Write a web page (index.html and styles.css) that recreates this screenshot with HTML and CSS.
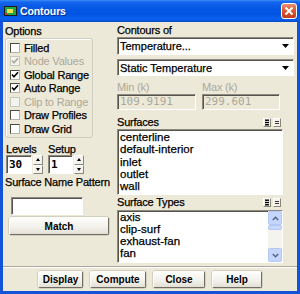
FILE: index.html
```html
<!DOCTYPE html>
<html lang="en">
<head>
  <meta charset="UTF-8">
  <title>Contours</title>
  <link rel="stylesheet" href="styles.css">
</head>
<body>
  <div class="window">
    <!-- TITLE BAR -->
    <div class="titlebar">
      <svg class="app-icon" width="13" height="10" viewBox="0 0 13 10">
        <rect x="0" y="0" width="13" height="10" fill="#1b1b1b"/>
        <rect x="1" y="1" width="11" height="8" fill="#1fa84a"/>
        <rect x="3" y="3" width="6" height="4" fill="#f4e04a"/>
        <rect x="1" y="7" width="3" height="2" fill="#d83a2a"/>
      </svg>
      <span class="title">Contours</span>
      <span class="close-btn">
        <svg width="10" height="10" viewBox="0 0 10 10"><path d="M1.5 1.5 L8.5 8.5 M8.5 1.5 L1.5 8.5" stroke="#fff" stroke-width="2"/></svg>
      </span>
    </div>

    <div class="client">
      <div class="main">
        <!-- LEFT -->
        <div class="col-left">
          <div class="label opt-label">Options</div>
          <div class="group">
            <div class="check"><span class="box"></span>Filled</div>
            <div class="check disabled"><span class="box on"><svg width="8" height="8" viewBox="0 0 8 8"><path d="M1 3.5 L3 5.8 L7 1.2" stroke="#aca899" stroke-width="1.6" fill="none"/></svg></span>Node Values</div>
            <div class="check"><span class="box on"><svg width="8" height="8" viewBox="0 0 8 8"><path d="M1 3.5 L3 5.8 L7 1.2" stroke="#000" stroke-width="1.6" fill="none"/></svg></span>Global Range</div>
            <div class="check"><span class="box on"><svg width="8" height="8" viewBox="0 0 8 8"><path d="M1 3.5 L3 5.8 L7 1.2" stroke="#000" stroke-width="1.6" fill="none"/></svg></span>Auto Range</div>
            <div class="check disabled"><span class="box"></span>Clip to Range</div>
            <div class="check"><span class="box"></span>Draw Profiles</div>
            <div class="check"><span class="box"></span>Draw Grid</div>
          </div>

          <div class="spins">
            <div class="spin">
              <div class="label">Levels</div>
              <div class="spin-ctl">
                <div class="field num levels">30</div>
                <div class="arrows"><span class="up"></span><span class="down"></span></div>
              </div>
            </div>
            <div class="spin">
              <div class="label">Setup</div>
              <div class="spin-ctl">
                <div class="field num setup">1</div>
                <div class="arrows"><span class="up"></span><span class="down"></span></div>
              </div>
            </div>
          </div>

          <div class="label snp-label">Surface Name Pattern</div>
          <div class="field pattern"></div>
          <div class="btn match">Match</div>
        </div>

        <!-- RIGHT -->
        <div class="col-right">
          <div class="label">Contours of</div>
          <div class="dd dd-first"><span>Temperature...</span><svg width="7" height="4" viewBox="0 0 7 4"><path d="M0 0 H7 L3.5 4 Z" fill="#000"/></svg></div>
          <div class="dd dd-second"><span>Static Temperature</span><svg width="7" height="4" viewBox="0 0 7 4"><path d="M0 0 H7 L3.5 4 Z" fill="#000"/></svg></div>

          <div class="minmax-labels">
            <div class="label disabled min-label">Min (k)</div>
            <div class="label disabled">Max (k)</div>
          </div>
          <div class="minmax-fields">
            <div class="field ro min-field">109.9191</div>
            <div class="field ro max-field">299.601</div>
          </div>

          <div class="list-head surfaces-head">
            <span class="label">Surfaces</span>
            <span class="tool-icons">
              <span class="tool"><svg width="6" height="7" viewBox="0 0 6 7"><rect x="1" y="0.5" width="4" height="1.4" fill="#000"/><rect x="1" y="2.8" width="4" height="1.4" fill="#000"/><rect x="1" y="5.1" width="4" height="1.4" fill="#000"/></svg></span>
              <span class="tool"><svg width="6" height="7" viewBox="0 0 6 7"><rect x="1" y="2" width="4" height="1" fill="#333"/><rect x="1" y="4" width="4" height="1" fill="#333"/></svg></span>
            </span>
          </div>
          <div class="list surfaces">
            <div>centerline</div>
            <div>default-interior</div>
            <div>inlet</div>
            <div>outlet</div>
            <div>wall</div>
          </div>

          <div class="list-head types-head">
            <span class="label">Surface Types</span>
            <span class="tool-icons">
              <span class="tool"><svg width="6" height="7" viewBox="0 0 6 7"><rect x="1" y="0.5" width="4" height="1.4" fill="#000"/><rect x="1" y="2.8" width="4" height="1.4" fill="#000"/><rect x="1" y="5.1" width="4" height="1.4" fill="#000"/></svg></span>
              <span class="tool"><svg width="6" height="7" viewBox="0 0 6 7"><rect x="1" y="2" width="4" height="1" fill="#333"/><rect x="1" y="4" width="4" height="1" fill="#333"/></svg></span>
            </span>
          </div>
          <div class="list types">
            <div class="items">
              <div>axis</div>
              <div>clip-surf</div>
              <div>exhaust-fan</div>
              <div>fan</div>
            </div>
            <div class="scrollbar">
              <div class="sb-btn"><svg width="7" height="5" viewBox="0 0 7 5"><path d="M0.8 4 L3.5 1.3 L6.2 4" stroke="#4d6185" stroke-width="1.4" fill="none"/></svg></div>
              <div class="sb-thumb"></div>
              <div class="sb-track"></div>
              <div class="sb-btn"><svg width="7" height="5" viewBox="0 0 7 5"><path d="M0.8 1 L3.5 3.7 L6.2 1" stroke="#4d6185" stroke-width="1.4" fill="none"/></svg></div>
            </div>
          </div>
        </div>
      </div>

      <div class="sep"></div>

      <!-- BUTTONS -->
      <div class="buttons">
        <div class="btn b-display">Display</div>
        <div class="btn b-compute">Compute</div>
        <div class="btn b-close">Close</div>
        <div class="btn b-help">Help</div>
      </div>
    </div>
  </div>
</body>
</html>
```

FILE: styles.css
```css
* {
  margin: 0;
  padding: 0;
  box-sizing: border-box;
}

body {
  width: 300px;
  height: 294px;
  overflow: hidden;
  font-family: "Liberation Sans", Arial, sans-serif;
  font-size: 11px;
  color: #000;
  background: #fff;
  -webkit-text-stroke: 0.25px;
}

.window {
  width: 300px;
  height: 294px;
  display: flex;
  flex-direction: column;
  background: #1353d8;
}

/* TITLE BAR */
.titlebar {
  height: 22px;
  flex: none;
  display: flex;
  align-items: center;
  padding: 0 3px;
  background: linear-gradient(#3d8df7 0, #1466ee 2px, #0759e6 7px, #0054e2 14px, #0a62ef 19px, #034acc 22px);
}

.app-icon {
  margin: 0 3px 0 1px;
}

.title {
  flex: 1;
  color: #fff;
  font-weight: bold;
  font-size: 10.5px;
  letter-spacing: -0.1px;
  text-shadow: 1px 1px 0 #0b2f8c;
  -webkit-text-stroke: 0;
}

.close-btn {
  width: 16px;
  height: 16px;
  border: 1px solid #fff;
  border-radius: 3px;
  background: linear-gradient(#ea8f70, #d9582f 50%, #c33c1b);
  display: flex;
  align-items: center;
  justify-content: center;
}

/* CLIENT AREA */
.client {
  flex: 1;
  margin: 0 3px 3px;
  background: #ece9d8;
  display: flex;
  flex-direction: column;
}

.main {
  height: 244px;
  display: flex;
  gap: 2px;
  padding: 2px 0 0 2px;
}

.col-left {
  width: 110px;
  display: flex;
  flex-direction: column;
}

.col-right {
  width: 177px;
  display: flex;
  flex-direction: column;
}

.label {
  height: 12px;
  line-height: 12px;
  letter-spacing: -0.2px;
  white-space: nowrap;
}

.disabled {
  color: #aca899;
  -webkit-text-stroke: 0;
}

.opt-label {
  margin-top: 1px;
}

.group {
  width: 88px;
  margin-top: 1px;
  padding: 2px 0 1px 4px;
  border: 1px solid #cfcdbf;
  border-radius: 3px;
  box-shadow: inset 1px 1px 0 #fff;
}

.check {
  height: 13.5px;
  display: flex;
  align-items: center;
  gap: 4px;
  letter-spacing: -0.2px;
  white-space: nowrap;
}

.box {
  width: 10px;
  height: 10px;
  flex: none;
  background: #fff;
  border: 1px solid;
  border-color: #4a4a44 #b5b3a8 #b5b3a8 #4a4a44;
  display: flex;
  align-items: center;
  justify-content: center;
}

.check.disabled .box {
  background: #f4f3ee;
  border-color: #c9c7ba;
}

/* fields */
.field {
  background: #fff;
  border: 1px solid;
  border-color: #8d8b7f #fff #fff #8d8b7f;
  box-shadow: inset 1px 1px 0 #55534b;
}

.spins {
  display: flex;
  gap: 5px;
  margin-top: 5.5px;
  padding-left: 1px;
}

.spin-ctl {
  height: 19px;
  display: flex;
  gap: 1px;
}

.num {
  font-family: "DejaVu Sans Mono", monospace;
  font-weight: bold;
  font-size: 11px;
  line-height: 17px;
  padding-left: 2px;
  -webkit-text-stroke: 0;
}

.levels {
  width: 26px;
}

.setup {
  width: 25px;
}

.arrows {
  width: 10px;
  display: flex;
  flex-direction: column;
}

.arrows span {
  flex: 1;
  background: #f3f2ec;
  border: 1px solid;
  border-color: #fff #8a887c #8a887c #fff;
  display: flex;
  align-items: center;
  justify-content: center;
}

.arrows .up::after {
  content: "";
  border-left: 2.5px solid transparent;
  border-right: 2.5px solid transparent;
  border-bottom: 3px solid #000;
}

.arrows .down::after {
  content: "";
  border-left: 2.5px solid transparent;
  border-right: 2.5px solid transparent;
  border-top: 3px solid #000;
}

.snp-label {
  margin-top: 2px;
}

.pattern {
  width: 72px;
  height: 18px;
  margin: 9px 0 0 6px;
}

/* buttons */
.btn {
  height: 18px;
  display: flex;
  align-items: center;
  justify-content: center;
  font-weight: bold;
  font-size: 10px;
  -webkit-text-stroke: 0;
  background: linear-gradient(#fdfdfb, #f1f0ea 60%, #e2e0d5);
  border: 1px solid;
  border-color: #fbfbf8 #6f6d62 #6f6d62 #fbfbf8;
  border-radius: 2px;
  box-shadow: 0 0 0 0.5px #b9b7aa;
}

.match {
  width: 100px;
  margin: 2px 0 0 4px;
}

/* right column */
.dd {
  height: 18px;
  display: flex;
  align-items: center;
  justify-content: space-between;
  padding: 0 4px 0 2px;
  background: #fff;
  border: 1px solid;
  border-color: #8d8b7f #fff #fff #8d8b7f;
  box-shadow: inset 1px 1px 0 #55534b;
  font-size: 11px;
}

.dd-first {
  margin-top: 1px;
}

.dd-second {
  height: 17px;
  margin-top: 4px;
}

.minmax-labels {
  display: flex;
  margin-top: 5px;
}

.min-label {
  width: 85px;
}

.minmax-fields {
  display: flex;
  gap: 6px;
  margin-top: 1px;
}

.ro {
  height: 16px;
  background: #ece9d8;
  color: #aca899;
  font-family: "DejaVu Sans Mono", monospace;
  font-size: 11px;
  line-height: 14px;
  padding-left: 2px;
  -webkit-text-stroke: 0;
}

.min-field {
  width: 79px;
}

.max-field {
  width: 78px;
}

.list-head {
  width: 166px;
  height: 12px;
  display: flex;
  justify-content: space-between;
  align-items: center;
}

.surfaces-head {
  margin-top: 6px;
}

.types-head {
  margin-top: 1px;
}

.tool-icons {
  display: flex;
  gap: 2px;
  margin-right: 2px;
}

.tool {
  width: 8px;
  height: 9px;
  background: #f3f2ec;
  border: 1px solid;
  border-color: #fff #8a887c #8a887c #fff;
  display: flex;
  align-items: center;
  justify-content: center;
}

.list {
  width: 166px;
  background: #fff;
  border: 1px solid;
  border-color: #8d8b7f #fff #fff #8d8b7f;
  box-shadow: inset 1px 1px 0 #55534b;
  font-size: 11.5px;
  white-space: nowrap;
}

.surfaces {
  height: 66px;
  margin-top: 1px;
  padding: 1px 0 0 2px;
  line-height: 12.25px;
}

.types {
  height: 53px;
  margin-top: 2px;
  display: flex;
  line-height: 12px;
}

.types .items {
  flex: 1;
  padding-left: 2px;
}

.scrollbar {
  width: 14px;
  display: flex;
  flex-direction: column;
  background: #f4f3ee;
}

.sb-btn {
  height: 14px;
  background: #c5d5fb;
  border: 1px solid #b4c8f6;
  border-radius: 2px;
  display: flex;
  align-items: center;
  justify-content: center;
}

.sb-thumb {
  height: 5px;
  background: #c9d8fb;
  border: 1px solid #b4c8f6;
  border-radius: 2px;
}

.sb-track {
  flex: 1;
}

/* bottom */
.sep {
  height: 2px;
  border-top: 1px solid #aca899;
  border-bottom: 1px solid #fff;
}

.buttons {
  display: flex;
  justify-content: center;
  gap: 7px;
  margin-top: 3px;
}

.buttons .btn {
  height: 17px;
}

.b-display {
  width: 45px;
}

.b-compute {
  width: 56px;
}

.b-close {
  width: 52px;
}

.b-help {
  width: 50px;
}
```
